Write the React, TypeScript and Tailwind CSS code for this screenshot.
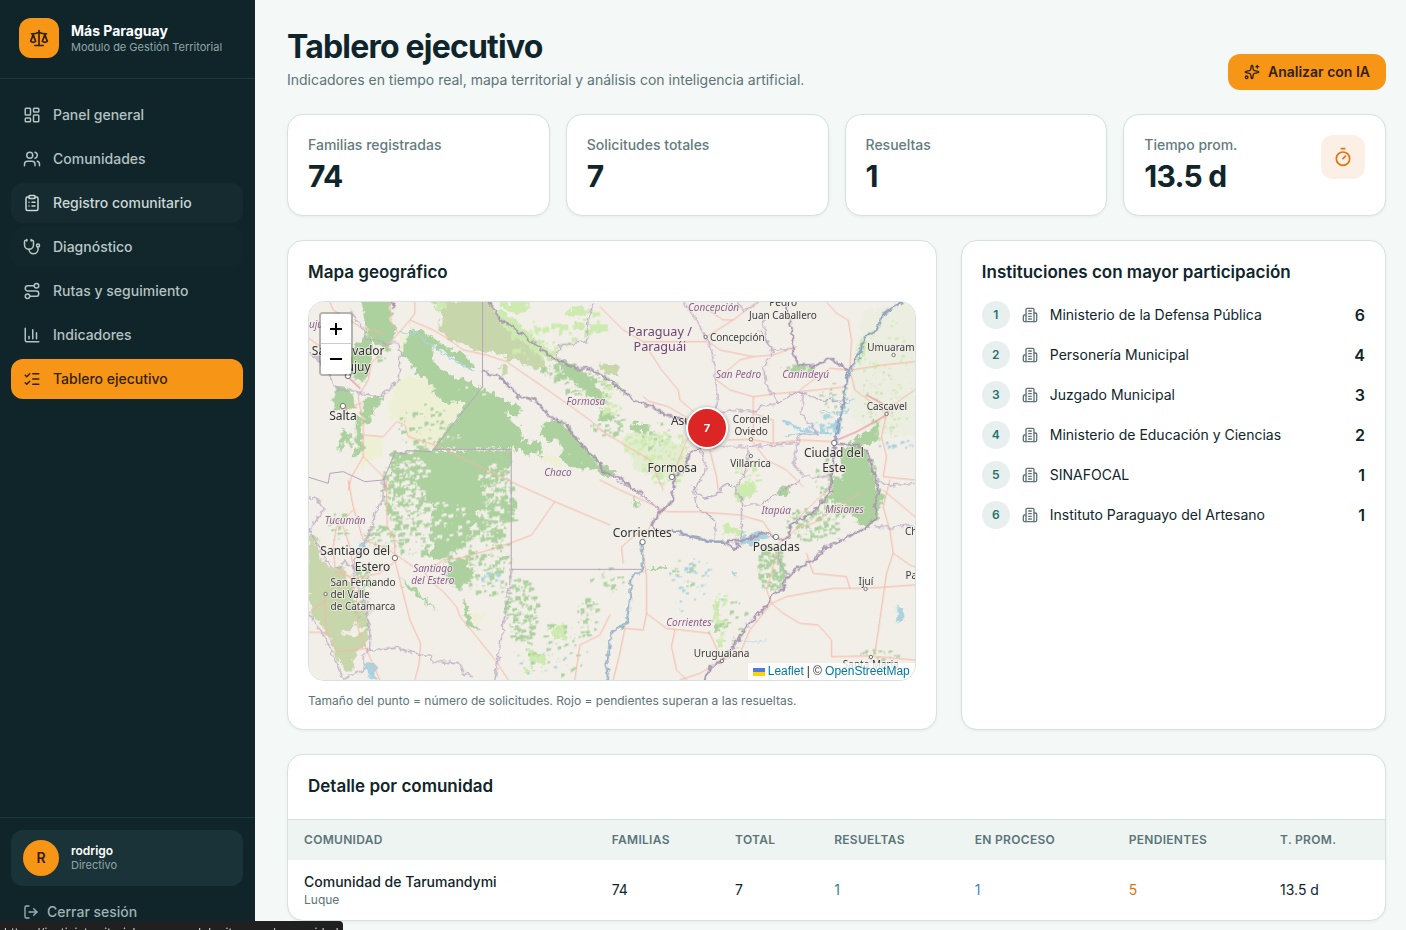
import type { ReactNode } from "react";
import {
  ChartColumn,
  ClipboardList,
  LayoutDashboard,
  ListChecks,
  LogOut,
  Route,
  Scale,
  Sparkles,
  Stethoscope,
  Timer,
  Users,
} from "lucide-react";

const navItems = [
  { label: "Panel general", icon: LayoutDashboard, state: "text-[#b3c2c2]" },
  { label: "Comunidades", icon: Users, state: "text-[#b3c2c2]" },
  { label: "Registro comunitario", icon: ClipboardList, state: "bg-[#162b30] text-[#cbd7d6]" },
  { label: "Diagnóstico", icon: Stethoscope, state: "bg-[#12272b] text-[#b9c7c7]" },
  { label: "Rutas y seguimiento", icon: Route, state: "text-[#b3c2c2]" },
  { label: "Indicadores", icon: ChartColumn, state: "text-[#b3c2c2]" },
  { label: "Tablero ejecutivo", icon: ListChecks, state: "bg-[#f79616] text-[#33200a]" },
];

const institutions = [
  { name: "Ministerio de la Defensa Pública", count: 6 },
  { name: "Personería Municipal", count: 4 },
  { name: "Juzgado Municipal", count: 3 },
  { name: "Ministerio de Educación y Ciencias", count: 2 },
  { name: "SINAFOCAL", count: 1 },
  { name: "Instituto Paraguayo del Artesano", count: 1 },
];

function Building() {
  return (
    <svg viewBox="0 0 24 24" className="size-4 shrink-0 text-[#5d7478]" fill="none" stroke="currentColor" strokeWidth="2" strokeLinecap="round" strokeLinejoin="round" aria-hidden="true">
      <path d="M6 22V4a2 2 0 0 1 2-2h8a2 2 0 0 1 2 2v18Z" />
      <path d="M6 12H4a2 2 0 0 0-2 2v6a2 2 0 0 0 2 2h2" />
      <path d="M18 9h2a2 2 0 0 1 2 2v9a2 2 0 0 1-2 2h-2" />
      <path d="M10 6h4M10 10h4M10 14h4M10 18h4" />
    </svg>
  );
}

function Card({ className = "", children }: { className?: string; children: ReactNode }) {
  return (
    <section className={"rounded-2xl border border-[#d5e2df] bg-white shadow-[0_1px_3px_rgba(16,37,42,0.06)] " + className}>
      {children}
    </section>
  );
}

function Sidebar() {
  return (
    <aside className="sticky top-0 flex h-screen w-[255px] shrink-0 flex-col overflow-hidden bg-[#10252a]">
      <div className="flex items-center gap-3 border-b border-[#1d393e] px-[19px] pt-[18px] pb-5">
        <span className="flex size-10 shrink-0 items-center justify-center rounded-xl bg-[#f79616] text-[#33200a]">
          <Scale className="size-5" />
        </span>
        <div className="pb-[2px]">
          <p className="text-sm leading-5 font-bold text-white">Más Paraguay</p>
          <p className="text-[11px] leading-3 whitespace-nowrap text-[#8fa5a6]">Modulo de Gestión Territorial</p>
        </div>
      </div>
      <nav className="flex flex-1 flex-col gap-1 pt-4 pr-3 pl-[11px]" aria-label="Principal">
        {navItems.map(({ label, icon: Icon, state }) => (
          <a key={label} href="#" className={"flex h-10 items-center gap-3 rounded-xl px-3 text-sm font-medium " + state}>
            <Icon className="size-[18px]" />
            {label}
          </a>
        ))}
      </nav>
      <div className="border-t border-[#1d393e] pt-3 pr-3 pl-[11px]">
        <div className="flex h-14 items-center gap-3 rounded-xl bg-[#1a3338] px-3">
          <span className="flex size-9 items-center justify-center rounded-full bg-[#f79616] text-sm font-semibold text-[#33200a]">R</span>
          <div className="pb-[2px]">
            <p className="text-xs leading-4 font-semibold text-white">rodrigo</p>
            <p className="text-[11px] leading-3 text-[#8fa5a6]">Directivo</p>
          </div>
        </div>
        <button type="button" className="mt-2 flex h-9 w-full items-center gap-2 px-3 text-sm font-medium text-[#9fb1b2]">
          <LogOut className="size-4" />
          Cerrar sesión
        </button>
      </div>
    </aside>
  );
}

function Stat({ label, value, children }: { label: string; value: string; children?: ReactNode }) {
  return (
    <Card className="flex items-start justify-between p-5">
      <div>
        <p className="text-sm font-medium text-[#647b7e]">{label}</p>
        <p className="mt-[3px] mb-px text-3xl leading-9 font-bold tracking-tight text-[#10252b]">{value}</p>
      </div>
      {children}
    </Card>
  );
}

/* Scatters small blocky patches of land cover inside an ellipse. */
function scatter(seed: number, cx: number, cy: number, rx: number, ry: number, n: number, size: number) {
  let s = seed * 7919 + 17;
  const rnd = () => {
    s = (s * 16807) % 2147483647;
    return s / 2147483647;
  };
  let d = "";
  for (let i = 0; i < n; i++) {
    const a = rnd() * Math.PI * 2;
    const r = Math.sqrt(rnd());
    const x = Math.round(cx + Math.cos(a) * r * rx);
    const y = Math.round(cy + Math.sin(a) * r * ry);
    const k = rnd();
    const w = Math.round(2 + k * k * size * 1.4);
    const h = Math.round(2 + rnd() * k * size);
    d += `M${x} ${y}h${w}v${h}h${-Math.round(w * 0.6)}v${Math.round(h * 0.4)}h${-Math.round(w * 0.4)}z`;
  }
  return d;
}

const GREEN = "#add19e";
const LIME = "#cdebb0";
const OLIVE = "#c8d7ab";
const LAND = "#f2efe9";
const WATER = "#aad3df";

const patches: [string, number, number, number, number, number, number][] = [
  [GREEN, 250, 130, 30, 100, 20, 12],
  [GREEN, 380, 410, 90, 70, 60, 13],
  [GREEN, 310, 600, 70, 110, 240, 16],
  [GREEN, 400, 740, 130, 60, 120, 14],
  [GREEN, 580, 620, 60, 130, 260, 17],
  [GREEN, 560, 820, 80, 100, 160, 11],
  [GREEN, 250, 740, 60, 40, 70, 10],
  [GREEN, 660, 960, 50, 100, 170, 11],
  [GREEN, 760, 1080, 100, 80, 60, 9],
  [GREEN, 860, 980, 30, 60, 40, 12],
  [GREEN, 110, 710, 30, 50, 20, 12],
  [GREEN, 180, 900, 40, 90, 60, 12],
  [LIME, 720, 150, 100, 60, 50, 20],
  [LIME, 850, 90, 60, 40, 14, 26],
  [GREEN, 780, 240, 60, 30, 60, 13],
  [GREEN, 860, 280, 70, 40, 70, 14],
  [GREEN, 920, 400, 60, 40, 40, 12],
  [LIME, 1060, 460, 100, 40, 120, 10],
  [LIME, 1090, 530, 70, 50, 90, 10],
  [LIME, 930, 320, 40, 60, 30, 14],
  [GREEN, 1050, 430, 70, 40, 30, 9],
  [GREEN, 1490, 230, 50, 14, 20, 12],
  [GREEN, 1600, 330, 50, 60, 26, 8],
  [LIME, 1330, 560, 40, 60, 50, 14],
  [GREEN, 1650, 620, 90, 60, 300, 12],
  [GREEN, 1530, 700, 80, 50, 180, 9],
  [GREEN, 1410, 830, 40, 70, 150, 11],
  [GREEN, 1600, 560, 60, 60, 50, 10],
  [LIME, 1760, 260, 80, 190, 90, 7],
  [OLIVE, 1740, 330, 60, 120, 60, 6],
  [GREEN, 1280, 1000, 60, 90, 30, 9],
  [LIME, 1260, 970, 20, 70, 20, 12],
  [GREEN, 1170, 850, 60, 60, 16, 9],
  [GREEN, 1740, 1090, 60, 20, 22, 10],
  [WATER, 1170, 850, 70, 50, 22, 10],
  [WATER, 1190, 920, 90, 50, 14, 8],
  [WATER, 570, 860, 40, 16, 14, 8],
  [WATER, 1580, 400, 50, 30, 22, 12],
  [WATER, 720, 1100, 90, 60, 10, 9],
  [WATER, 1790, 460, 60, 12, 14, 9],
  [GREEN, 920, 870, 50, 40, 25, 9],
];

const holes: [number, number, number, number, number, number][] = [
  [320, 540, 60, 50, 100, 11],
  [330, 640, 50, 60, 110, 13],
  [580, 580, 50, 60, 70, 9],
  [430, 690, 70, 60, 60, 9],
  [530, 300, 60, 20, 8, 8],
  [440, 450, 50, 30, 14, 9],
  [850, 490, 50, 40, 8, 6],
];

const landcover: [string, string, string][] = [
  ["0 0", "#ebeee0", "1690,60 1845,40 1845,440 1730,430 1650,380 1660,240"],
  ["0 0", "#e4edd2", "960,440 1050,420 1170,480 1150,540 1110,570 1010,540"],
  ["0 0", "#eef0d5", "300,260 380,262 420,340 495,340 445,410 400,475 320,450 320,400 270,380 265,340"],
  ["0 0", "#eef0d5", "195,440 250,440 250,500 200,510 170,560 190,490"],
  ["0 0", "#eef0d5", "305,130 345,130 345,190 305,185"],
  ["0 0", "#eef0d5", "720,490 770,500 790,530 740,520"],
  ["0 0", OLIVE, "385,30 565,30 600,80 660,130 720,190 740,235 700,235 660,215 600,190 520,180 460,150 415,120 425,70"],
  ["0 0", LIME, "575,50 640,85 700,140 760,190 770,215 720,195 650,145 600,90"],
  ["0 0", LIME, "600,36 680,36 690,60 650,75 610,55"],
  ["0 0", LIME, "800,60 850,50 860,75 800,80"],
  ["0 0", LIME, "820,100 850,95 845,120 825,120"],
  ["0 0", LIME, "410,36 440,36 430,62 405,60"],
  ["0 0", GREEN, "760,205 800,215 855,250 900,300 925,340 900,345 850,295 800,255"],
  ["0 0", OLIVE, "600,230 625,232 625,255 602,250"],
  ["0 0", GREEN, "190,30 270,30 272,90 290,125 268,165 240,172 215,150 200,130 188,90"],
  ["0 0", GREEN, "200,130 215,155 210,240 190,285 160,265 150,200 175,160"],
  ["0 0", GREEN, "305,195 330,120 360,130 395,160 400,215 440,250 500,275 548,290 590,320 660,355 660,375 620,370 640,400 665,420 665,455 725,455 720,500 670,490 665,478 410,478 400,470 440,420 495,350 495,335 425,340 400,300 380,260 345,250 330,215"],
  ["0 0", GREEN, "325,108 400,140 450,180 490,185 525,235 490,225 440,190 390,165"],
  ["0 0", GREEN, "750,385 800,405 830,440 870,490 920,552 870,535 820,535 775,500 790,465 725,440 730,400"],
  ["0 0", GREEN, "200,325 250,320 245,345 215,370 205,400 190,400 185,345"],
  ["0 0", GREEN, "110,290 165,305 165,345 140,365 98,355"],
  ["0 0", GREEN, "165,375 185,380 190,480 150,510 170,470"],
  ["0 0", GREEN, "130,415 160,440 150,480 135,450 110,485 120,450"],
  ["0 0", GREEN, "290,485 635,480 634,530 590,560 550,600 535,680 490,760 420,815 370,790 390,730 360,680 300,640 270,560 275,490"],
  ["0 570", LAND, "375,60 410,80 390,110 385,150 402,190 395,225 380,200 370,130 345,130 355,90"],
  ["0 570", GREEN, "440,245 505,230 512,290 480,335 440,300"],
  ["0 570", GREEN, "305,290 345,325 410,393 375,368 310,315"],
  ["0 570", GREEN, "485,355 512,380 512,425 545,455 500,435"],
  ["0 570", OLIVE, "25,160 50,170 60,230 90,260 130,265 165,340 165,370 205,400 210,480 165,520 160,570 130,575 85,470 40,400 25,370"],
  ["0 570", LAND, "130,460 165,430 200,440 160,470"],
  ["0 570", "#eef0d5", "510,400 550,402 550,430 520,425"],
  ["0 570", LIME, "760,435 805,435 800,475 760,475"],
  ["0 570", LIME, "690,505 740,530 740,555 690,545"],
  ["0 570", LIME, "670,560 695,570 690,585 670,580"],
  ["0 570", WATER, "200,545 225,548 230,590 205,598"],
  ["0 570", WATER, "180,185 200,190 195,205 182,200"],
  ["900 0", OLIVE, "0,215 50,230 60,260 0,240"],
  ["900 0", GREEN, "0,360 40,375 30,395 0,385"],
  ["900 0", GREEN, "85,400 145,405 145,425 90,420"],
  ["900 0", GREEN, "0,520 45,545 40,560 0,555"],
  ["900 0", GREEN, "835,390 835,445 800,468 745,462 790,430"],
  ["900 0", GREEN, "720,470 780,462 805,490 820,540 838,610 835,680 820,700 780,690 760,660 740,640 720,600 730,540"],
  ["900 0", LIME, "780,150 800,145 795,190 775,235"],
  ["900 570", LIME, "375,130 430,155 425,170 370,160"],
  ["900 570", LIME, "405,30 460,0 470,40 410,65"],
  ["900 570", GREEN, "700,0 832,0 832,60 820,120 800,145 765,125 750,80 700,50"],
  ["900 570", GREEN, "540,15 570,20 560,55 535,40"],
  ["900 570", GREEN, "135,280 160,262 195,255 195,265 165,270"],
  ["900 570", GREEN, "100,50 118,65 110,80 98,70"],
  ["900 570", GREEN, "350,430 375,425 370,450 350,452"],
  ["900 570", LIME, "348,350 360,360 355,420 342,415"],
  ["900 570", LIME, "350,480 375,480 370,500 350,498"],
  ["900 570", WATER, "405,192 430,172 490,150 515,165 480,180 455,205 430,190"],
  ["900 570", WATER, "890,375 912,385 908,420 895,430"],
  ["900 570", WATER, "400,270 418,275 410,290"],
  ["900 0", WATER, "700,395 722,390 722,425 706,440"],
];

const roads: [string, string[]][] = [
  ["0 0", [
    "345,36 345,70 330,90 300,125 250,180 215,220 205,270 175,320 190,400 190,500 250,560 260,600",
    "330,90 400,120 450,150 490,180 560,195 620,215 700,270 800,340 870,390 930,440",
    "190,435 250,440 290,395 315,405 325,440 420,470 520,520 640,578",
    "120,358 185,340", "190,500 155,560 145,600", "90,36 100,60 180,110 250,130", "270,36 275,100 295,128", "27,145 90,190 150,265 175,290",
  ]],
  ["0 570", [
    "640,8 765,65 930,135",
    "765,65 695,165 630,190 550,215 480,235 430,240 375,280 400,310 430,335 470,380 480,410 530,470 590,545 625,600",
    "145,0 160,80 190,180 250,200 290,225 340,260", "285,240 300,300 330,420 362,490 358,550 345,600",
    "260,0 262,140 285,180 285,230", "160,90 110,140 100,200 105,260 150,290 170,350 175,450 205,520 240,600",
    "130,140 150,200 160,260", "930,405 900,465 840,495 825,600", "27,457 80,457 110,515 205,505",
    "105,275 160,295 240,280 285,245", "75,345 75,400 80,457", "75,360 27,400",
  ]],
  ["900 0", [
    "0,50 70,120 130,155 320,155", "130,155 185,240 235,300 240,330 300,380", "320,140 400,90 470,36",
    "320,150 360,180 460,200 520,195 590,170", "350,270 390,300 460,320 540,310 650,300 740,290", "460,320 460,440 453,448",
    "385,450 453,448 520,460 600,450 700,455", "680,36 710,70 745,90 755,150 750,240 765,300 860,370",
    "755,240 850,225 945,215", "860,370 845,440 860,500 850,560 945,570", "130,320 150,335 205,350 265,385",
    "0,420 100,480 150,510 190,600", "945,300 900,330 860,370", "220,555 260,450 310,410", "453,448 500,510 560,540 610,590",
    "330,480 350,560 355,600", "750,240 690,235 640,270 600,300", "325,60 370,90 400,90", "350,270 420,210 460,200", "520,460 520,390 460,370",
  ]],
  ["900 570", [
    "150,70 200,95 290,95 420,105 490,125 520,170", "195,85 150,140 125,190 140,290 140,400 200,445 330,460 365,540",
    "70,250 65,200 125,150", "75,445 60,520 40,600", "75,445 130,450 140,400", "515,370 560,350 700,325 800,325 945,315",
    "515,370 550,400 600,430 655,435 695,480 695,530 810,528 945,540", "870,150 880,220 860,280 840,420 825,520",
    "880,220 930,255 945,260", "515,370 500,330 520,260 535,200", "365,540 300,580 240,600", "365,540 420,520 450,450 515,370",
    "535,190 600,140 640,130 700,90 780,40", "620,220 640,280 740,290 750,325", "225,450 215,500 230,570 260,600", "0,0 60,30 150,70",
    "870,150 850,80 870,0", "600,110 650,60 700,20", "850,30 945,110",
  ]],
];

const borders: [string, string[]][] = [
  ["0 0", [
    "548,36 548,290 395,485 318,482 318,492 285,488 255,560 250,570 195,575 130,545 90,550 85,580 27,562",
    "400,478 634,478 634,838 1030,838",
    "150,60 180,100 200,150 240,150 260,170 275,158 299,158 299,265 270,295 240,320 195,315 150,300 110,298 90,260 50,200 27,190",
    "880,36 865,90 860,155 780,165 770,205",
  ]],
  ["0 570", [
    "634,268 630,310 585,600",
    "250,0 250,60 235,75 210,155 190,190 165,245 160,270 165,310 195,360 210,460 210,510 190,525 190,570 130,598 80,480 27,400",
    "210,510 280,502 350,520 395,530 395,542 480,552 490,580 518,590", "27,150 70,90 60,60 27,50", "27,150 60,210 95,265 110,265 135,243 165,265",
  ]],
  ["900 0", [
    "250,36 290,90 315,140 340,190 345,260 355,320 350,350 320,370",
    "490,90 500,150 520,190 490,230 500,290 535,340 480,350 470,365 390,360 350,370", "415,40 430,65 475,40", "480,125 515,180 575,175",
    "535,340 590,305 610,310 660,330 740,335", "610,310 605,370 655,435 600,430 580,520 610,560 690,560",
    "330,470 430,470 520,465 590,460", "445,475 440,540 410,590", "300,475 320,540 280,600",
  ]],
  ["900 570", [
    "280,20 290,80 350,125 340,175", "280,20 310,55 350,45 380,10 405,20 430,75 480,75 520,50 600,0", "425,50 425,170",
    "50,0 100,30 190,95", "535,200 540,255 565,285", "830,140 880,145 910,135 945,140", "830,0 870,15 945,10",
  ]],
];

const frontiers: [string, string][] = [
  ["0 0", "565,36 600,85 650,120 715,170 760,205 830,235 870,235 930,272 1010,335 1060,350 1095,375 1140,385 1190,410 1220,440 1200,470 1170,490 1150,540 1125,560 1115,640 1080,665 1055,705 1070,725 1130,725 1190,745 1240,755 1280,755 1300,750 1340,750 1390,725 1440,750 1470,740 1470,705 1540,670 1560,640 1590,610 1595,570 1600,520 1603,460"],
  ["900 0", "745,240 690,205 640,230 595,225 580,190 575,110 565,80 560,36"],
  ["900 0", "703,460 770,465 800,480 820,540 835,600 825,650 830,680 800,715 760,730 730,750 680,770 640,810 600,830 570,855 550,875 555,895 520,910 500,945 440,1010 400,1070 365,1115 330,1130 315,1170"],
  ["0 0", "548,245 600,262 640,300 660,320 705,330 750,380 800,405 830,450 900,520 915,552 960,560 1000,600 1030,610"],
  ["900 570", "380,190 400,205 420,200 410,185 385,182"],
  ["0 0", "275,36 285,45 280,60"],
];

const labels: { x: number; y: number; text: string; kind: "city" | "town" | "province" | "country"; anchor?: "start" | "middle" | "end" }[] = [
  { x: 27, y: 115, text: "ujuy", kind: "province", anchor: "start" },
  { x: 145, y: 196, text: "San Salvador", kind: "city" },
  { x: 145, y: 243, text: "de Jujuy", kind: "city" },
  { x: 129, y: 391, text: "Salta", kind: "city" },
  { x: 858, y: 345, text: "Formosa", kind: "province" },
  { x: 774, y: 557, text: "Chaco", kind: "province" },
  { x: 136, y: 702, text: "Tucumán", kind: "province" },
  { x: 271, y: 796, text: "Santiago del", kind: "city", anchor: "end" },
  { x: 271, y: 843, text: "Estero", kind: "city", anchor: "end" },
  { x: 92, y: 887, text: "San Fernando", kind: "town", anchor: "start" },
  { x: 92, y: 923, text: "del Valle", kind: "town", anchor: "start" },
  { x: 92, y: 959, text: "de Catamarca", kind: "town", anchor: "start" },
  { x: 399, y: 845, text: "Santiago", kind: "province" },
  { x: 399, y: 881, text: "del Estero", kind: "province" },
  { x: 1241, y: 62, text: "Concepción", kind: "province" },
  { x: 1450, y: 49, text: "Pedro", kind: "town" },
  { x: 1449, y: 86, text: "Juan Caballero", kind: "town" },
  { x: 1080, y: 139, text: "Paraguay /", kind: "country" },
  { x: 1080, y: 184, text: "Paraguái", kind: "country" },
  { x: 1230, y: 153, text: "Concepción", kind: "town", anchor: "start" },
  { x: 1773, y: 183, text: "Umuaram", kind: "town" },
  { x: 1316, y: 265, text: "San Pedro", kind: "province" },
  { x: 1517, y: 265, text: "Canindeyú", kind: "province" },
  { x: 1761, y: 361, text: "Cascavel", kind: "town" },
  { x: 1113, y: 404, text: "Asunción", kind: "city", anchor: "start" },
  { x: 1354, y: 400, text: "Coronel", kind: "town" },
  { x: 1354, y: 436, text: "Oviedo", kind: "town" },
  { x: 1602, y: 501, text: "Ciudad del", kind: "city" },
  { x: 1602, y: 547, text: "Este", kind: "city" },
  { x: 1352, y: 531, text: "Villarrica", kind: "town" },
  { x: 1117, y: 545, text: "Formosa", kind: "city" },
  { x: 1429, y: 672, text: "Itapúa", kind: "province" },
  { x: 1634, y: 669, text: "Misiones", kind: "province" },
  { x: 1027, y: 741, text: "Corrientes", kind: "city" },
  { x: 1429, y: 783, text: "Posadas", kind: "city" },
  { x: 1815, y: 734, text: "Chapecó", kind: "town", anchor: "start" },
  { x: 1817, y: 866, text: "Passo Fundo", kind: "town", anchor: "start" },
  { x: 1698, y: 886, text: "Ijuí", kind: "town" },
  { x: 1167, y: 1007, text: "Corrientes", kind: "province" },
  { x: 1265, y: 1101, text: "Uruguaiana", kind: "town" },
  { x: 1713, y: 1135, text: "Santa Maria", kind: "town" },
];

const labelStyles = {
  city: "fill-[#333333] text-[36px]",
  town: "fill-[#3b3b3b] text-[30px]",
  province: "fill-[#8d618b] text-[30px] italic",
  country: "fill-[#6f4673] text-[38px]",
};

const towns: [number, number, number][] = [
  [144, 258, 8], [129, 348, 8], [285, 804, 8], [77, 912, 5], [1217, 141, 5], [1781, 195, 5], [1760, 372, 5], [1353, 448, 5],
  [1603, 459, 8], [1353, 498, 5], [1116, 561, 8], [1028, 756, 8], [1428, 741, 8], [1697, 897, 5], [1266, 1113, 5], [1713, 1101, 5],
];

function MapDrawing() {
  return (
    <svg viewBox="27 36 1818 1134" preserveAspectRatio="xMidYMid slice" className="block h-full w-full" role="img" aria-label="Mapa territorial">
      <defs>
        <filter id="coast" x="0" y="0" width="1900" height="1200" filterUnits="userSpaceOnUse" colorInterpolationFilters="sRGB">
          <feTurbulence type="fractalNoise" baseFrequency="0.05" numOctaves="3" seed="4" />
          <feDisplacementMap in="SourceGraphic" scale="34" xChannelSelector="R" yChannelSelector="G" />
        </filter>
        <filter id="wiggle" x="0" y="0" width="1900" height="1200" filterUnits="userSpaceOnUse" colorInterpolationFilters="sRGB">
          <feTurbulence type="fractalNoise" baseFrequency="0.06" numOctaves="2" seed="9" />
          <feDisplacementMap in="SourceGraphic" scale="20" xChannelSelector="R" yChannelSelector="G" />
        </filter>
      </defs>
      <rect x="0" y="0" width="1900" height="1200" fill={LAND} />
      <g filter="url(#coast)">
        {landcover.map(([offset, fill, points], i) => (
          <polygon key={i} transform={`translate(${offset})`} fill={fill} points={points} />
        ))}
      </g>
      {patches.map(([fill, ...p], i) => (
        <path key={i} fill={fill} d={scatter(i + 3, ...p)} />
      ))}
      {holes.map((p, i) => (
        <path key={i} fill={LAND} d={scatter(i + 90, ...p)} />
      ))}
      <g fill="none" strokeLinejoin="round" strokeLinecap="round">
        <g stroke="#f7b5a3" strokeWidth="3">
          {roads.flatMap(([offset, lines]) =>
            lines.map((points) => <polyline key={offset + points} transform={`translate(${offset})`} points={points} />),
          )}
          <polyline stroke="#ee9aa5" strokeWidth="4" points="1600,455 1670,425 1735,390 1765,370 1755,345 1700,315" />
          <polyline stroke="#ee9aa5" strokeWidth="4" points="145,262 165,280 180,295" />
        </g>
        <g filter="url(#wiggle)">
          <g stroke={WATER} strokeWidth="4">
            <polyline points="300,128 350,130 400,170 430,190 480,220 520,245" />
            <polyline points="1450,390 1480,410 1530,425 1590,430" strokeWidth="7" />
            <polyline points="1460,440 1520,425 1540,400" />
            <polyline points="1560,360 1610,370 1650,360" />
            <polyline points="1590,320 1620,345 1660,330" />
            <polyline points="1300,1040 1340,1058 1400,1050" strokeWidth="2" />
          </g>
          <g stroke="#b9a5c2" strokeWidth="3.5">
            {borders.slice(1).flatMap(([offset, lines]) =>
              lines.map((points) => <polyline key={offset + points} transform={`translate(${offset})`} points={points} />),
            )}
            <polyline points={borders[0][1][2]} />
            <polyline points={borders[0][1][3]} />
          </g>
          <g stroke="#a796b0" strokeWidth="6.5">
            {frontiers.map(([offset, points]) => (
              <polyline key={points} transform={`translate(${offset})`} points={points} />
            ))}
          </g>
          <polyline stroke="#8ea3bd" strokeWidth="7" points="1603,460 1615,410 1630,340 1645,250 1680,190 1690,145 1730,120 1750,70 1805,36" />
          <polyline stroke="#9ab4c8" strokeWidth="7" points="1025,760 1030,840 995,860 990,930 980,1000 935,1030 920,1120 925,1170" />
          <polyline stroke="#9aa9c0" strokeWidth="6" points="1060,722 1130,725 1190,745 1240,755 1280,755" />
        </g>
        <g stroke="#b5a3bc" strokeWidth="3">
          <polyline points={borders[0][1][0]} />
          <polyline points={borders[0][1][1]} />
        </g>
      </g>
      <g fill="#ffffff" stroke="#5a5a5a" strokeWidth="2.5">
        {towns.map(([x, y, r]) => (
          <circle key={`${x}-${y}`} cx={x} cy={y} r={r} />
        ))}
      </g>
      <g className="font-['Noto_Sans',sans-serif]" stroke={LAND} strokeOpacity="0.75" strokeWidth="6" strokeLinejoin="round" paintOrder="stroke">
        {labels.map(({ x, y, text, kind, anchor = "middle" }) => (
          <text key={`${text}-${x}-${y}`} x={x} y={y} textAnchor={anchor} className={labelStyles[kind]}>
            {text}
          </text>
        ))}
      </g>
    </svg>
  );
}

function TerritoryMap() {
  return (
    <div className="relative h-[380px] overflow-hidden rounded-2xl border border-[#d5e2df]">
      <MapDrawing />
      <div className="absolute top-[10px] left-[10px] flex flex-col overflow-hidden rounded border-2 border-black/25 bg-clip-padding text-black">
        <button type="button" aria-label="Acercar" className="flex size-[30px] items-center justify-center border-b border-[#cccccc] bg-white">
          <svg viewBox="0 0 12 12" className="size-3" stroke="currentColor" strokeWidth="2" aria-hidden="true">
            <path d="M6 0v12M0 6h12" />
          </svg>
        </button>
        <button type="button" aria-label="Alejar" className="flex size-[30px] items-center justify-center bg-white">
          <svg viewBox="0 0 12 12" className="size-3" stroke="currentColor" strokeWidth="2" aria-hidden="true">
            <path d="M0 6h12" />
          </svg>
        </button>
      </div>
      <button type="button" className="absolute top-1/3 left-[65.7%] flex size-[42px] -translate-x-1/2 -translate-y-1/2 items-center justify-center rounded-full border-2 border-white bg-[#dc2626] text-[11px] font-bold text-white shadow-[0_1px_4px_rgba(0,0,0,0.4)]">
        7
      </button>
      <div className="absolute right-0 bottom-0 flex items-center gap-[3px] bg-white/80 px-[5px] font-['Liberation_Sans',sans-serif] text-xs leading-[17px] text-[#333333]">
        <svg viewBox="0 0 12 8" className="h-2 w-3" aria-hidden="true">
          <path fill="#4C7BE1" d="M0 0h12v4H0z" />
          <path fill="#FFD500" d="M0 4h12v4H0z" />
        </svg>
        <a href="#" className="text-[#0078a8]">Leaflet</a>
        <span>|</span>
        <span>
          © <a href="#" className="text-[#0078a8]">OpenStreetMap</a>
        </span>
      </div>
    </div>
  );
}

const columns = ["Comunidad", "Familias", "Total", "Resueltas", "En proceso", "Pendientes", "T. prom."];

export default function App() {
  return (
    <div className="flex h-screen overflow-hidden bg-[#f4f8f7] font-['Inter',sans-serif] text-[#10252b]">
      <Sidebar />
      <main className="min-w-0 flex-1 overflow-hidden pt-[29px] pr-5 pl-8">
        <header className="flex items-end justify-between gap-4">
          <div>
            <h1 className="text-[32px] leading-9 font-bold tracking-tight">Tablero ejecutivo</h1>
            <p className="mt-[5px] text-sm text-[#5d7478]">
              Indicadores en tiempo real, mapa territorial y análisis con inteligencia artificial.
            </p>
          </div>
          <button type="button" className="flex h-9 items-center gap-2 rounded-xl bg-[#f79616] px-4 text-sm font-semibold text-[#33200a]">
            <Sparkles className="size-4" />
            Analizar con IA
          </button>
        </header>

        <div className="mt-6 grid grid-cols-4 gap-4">
          <Stat label="Familias registradas" value="74" />
          <Stat label="Solicitudes totales" value="7" />
          <Stat label="Resueltas" value="1" />
          <Stat label="Tiempo prom." value="13.5 d">
            <span className="flex size-11 items-center justify-center rounded-xl bg-[#fcf0e6] text-[#de740d]">
              <Timer className="size-5" />
            </span>
          </Stat>
        </div>

        <div className="mt-6 grid grid-cols-5 gap-6">
          <Card className="col-span-3 p-5">
            <h2 className="mb-[18px] text-[17px] leading-[22px] font-semibold">Mapa geográfico</h2>
            <TerritoryMap />
            <p className="mt-3 text-xs text-[#5d7478]">
              Tamaño del punto = número de solicitudes. Rojo = pendientes superan a las resueltas.
            </p>
          </Card>
          <Card className="col-span-2 p-5">
            <h2 className="mb-[18px] text-[17px] leading-[22px] font-semibold">Instituciones con mayor participación</h2>
            <ol className="flex flex-col gap-3">
              {institutions.map(({ name, count }, i) => (
                <li key={name} className="flex h-7 items-center gap-3">
                  <span className="flex size-7 items-center justify-center rounded-full bg-[#e7f0ee] text-xs font-semibold text-[#1f7370]">
                    {i + 1}
                  </span>
                  <Building />
                  <span className="flex-1 text-sm">{name}</span>
                  <span className="text-base font-semibold">{count}</span>
                </li>
              ))}
            </ol>
          </Card>
        </div>

        <Card className="mt-6 overflow-hidden">
          <h2 className="border-b border-[#d5e2df] px-5 pt-5 pb-[22px] text-[17px] leading-[22px] font-semibold">Detalle por comunidad</h2>
          <table className="w-full text-left text-sm">
            <thead className="bg-[#eef4f2] text-xs tracking-wide text-[#5d7478] uppercase">
              <tr>
                {columns.map((name) => (
                  <th key={name} scope="col" className="px-4 py-3 font-semibold">
                    {name}
                  </th>
                ))}
              </tr>
            </thead>
            <tbody>
              <tr>
                <td className="px-4 py-3">
                  <p className="font-medium">Comunidad de Tarumandymi</p>
                  <p className="text-xs text-[#5d7478]">Luque</p>
                </td>
                <td className="px-4 py-3">74</td>
                <td className="px-4 py-3">7</td>
                <td className="px-4 py-3 text-[#2c8a86]">1</td>
                <td className="px-4 py-3 text-[#4a7fd6]">1</td>
                <td className="px-4 py-3 text-[#de740d]">5</td>
                <td className="px-4 py-3">13.5 d</td>
              </tr>
            </tbody>
          </table>
        </Card>
      </main>
      <div className="fixed bottom-0 left-0 h-[9px] w-[343px] overflow-hidden rounded-tr bg-[#202020] px-1 pt-1 text-xs whitespace-nowrap text-[#d0d0d0]">
        https://justiciaterritorial-ucom.modelwritor.com/comunidades
      </div>
    </div>
  );
}
